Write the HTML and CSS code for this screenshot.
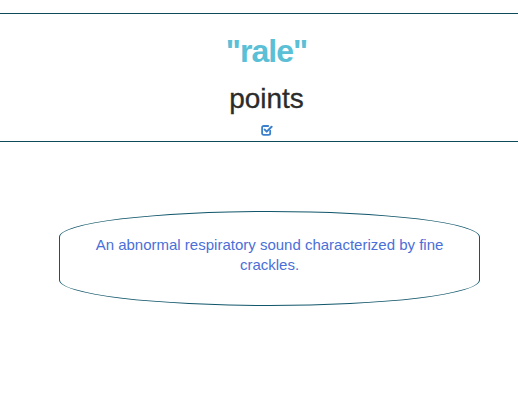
FILE: index.html
```html
<!DOCTYPE html>
<html>
<head>
<meta charset="utf-8">
<link rel="stylesheet" href="styles.css">
</head>
<body>
<header class="card-head">
  <h1 class="term">"rale"</h1>
  <h2 class="label">points</h2>
  <div class="check">
    <svg width="12" height="12" viewBox="0 0 12 12" aria-hidden="true">
      <path d="M9.2 6.6V9.3a1.6 1.6 0 0 1-1.6 1.6H2.7a1.6 1.6 0 0 1-1.6-1.6V3.6A1.6 1.6 0 0 1 2.7 2H7.2" fill="none" stroke="#3c80cc" stroke-width="1.8" stroke-linecap="round"/>
      <path d="M3.7 5.6L5.7 7.6L10.6 2.7" fill="none" stroke="#3c80cc" stroke-width="2" stroke-linecap="round" stroke-linejoin="round"/>
    </svg>
  </div>
</header>
<main class="content">
  <div class="definition">
    <p>An abnormal respiratory sound characterized by fine crackles.</p>
  </div>
</main>
</body>
</html>
```
FILE: styles.css
```css
html, body {
  margin: 0;
  padding: 0;
  background: #fff;
}
body {
  font-family: "Liberation Sans", Arial, sans-serif;
  color: #333;
}
.card-head {
  margin-top: 13px;
  border-top: 1px solid #0f4a58;
  border-bottom: 1px solid #0f4a58;
  padding: 19px 0 5px 15px;
  text-align: center;
}
.term {
  margin: 0;
  font-size: 32px;
  line-height: 36px;
  font-weight: bold;
  letter-spacing: -1px;
  color: #5bbfd6;
}
.label {
  margin: 14px 0 0;
  font-size: 28px;
  line-height: 32px;
  font-weight: normal;
  -webkit-text-stroke: 0.3px #2b2b2b;
  color: #2b2b2b;
}
.check {
  margin-top: 9px;
  height: 12px;
  line-height: 0;
}
.content {
  padding: 69px 0 0 15px;
}
.definition {
  box-sizing: border-box;
  margin-left: 44px;
  width: 421px;
  height: 95px;
  border: 1px solid #11566a;
  border-radius: 50% / 26px;
  padding: 23px 16px 0;
  text-align: center;
}
.definition p {
  margin: 0;
  font-size: 15px;
  line-height: 20px;
  color: #4a6fd8;
}
```
